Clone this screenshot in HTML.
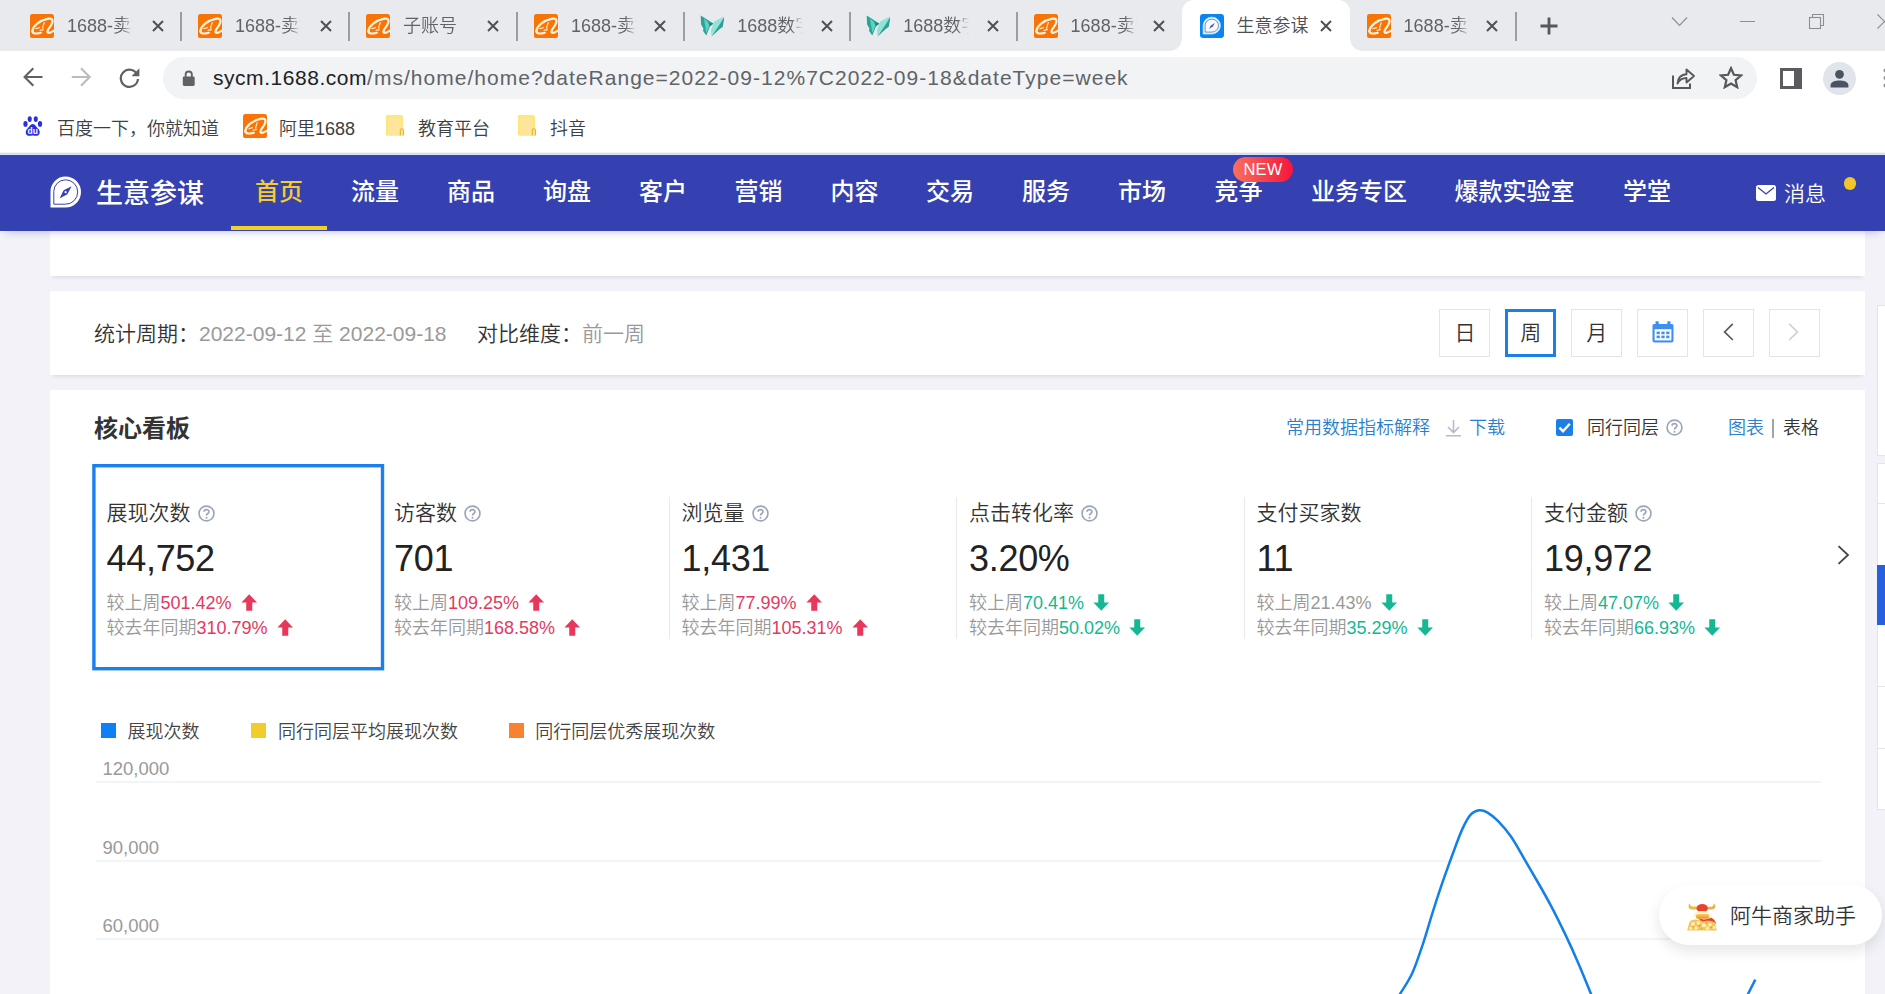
<!DOCTYPE html>
<html lang="zh-CN">
<head>
<meta charset="utf-8">
<title>生意参谋</title>
<style>
*{box-sizing:border-box;margin:0;padding:0}
html,body{width:1885px;height:994px;overflow:hidden;background:#f2f2f8}
body{position:relative;font-family:"Liberation Sans","Noto Sans CJK SC",sans-serif;color:#333;font-weight:350}
.abs{position:absolute}
.t{position:absolute;white-space:nowrap;line-height:1}
/* ===== browser chrome ===== */
#tabbar{position:absolute;left:0;top:0;width:1885px;height:51px;background:#e8eaed}
#toolbar{position:absolute;left:0;top:51px;width:1885px;height:101px;background:#fff}
#chromeline{position:absolute;left:0;top:152px;width:1885px;height:3px;background:linear-gradient(#f1f3f5 0,#f1f3f5 1px,#d6dce3 1px,#d6dce3 2px,#dce4fb 2px,#dce4fb 3px);z-index:5}
.tab{position:absolute;top:0;height:51px;width:168px}
.fav{position:absolute;left:0;top:14px;width:24px;height:24px;border-radius:4px;background:#f56a0d;overflow:hidden}
.ttl{position:absolute;left:37px;top:15px;font-size:18px;color:#5f6368;line-height:22px;white-space:nowrap;width:72px;overflow:hidden;
 -webkit-mask-image:linear-gradient(90deg,#000 0,#000 54px,transparent 66px);mask-image:linear-gradient(90deg,#000 0,#000 54px,transparent 66px)}
.cls{position:absolute;left:120px;top:19px;width:14px;height:14px}
.sep{position:absolute;left:151px;top:12px;width:2px;height:29px;background:#9a9da1}
#acttab{position:absolute;left:1182px;top:0;width:168px;height:51px;background:#fff;border-radius:12px 12px 0 0}
#acttab:before,#acttab:after{content:"";position:absolute;bottom:0;width:12px;height:12px}
#acttab:before{left:-12px;background:radial-gradient(circle at 0 0,transparent 11.5px,#fff 12px)}
#acttab:after{right:-12px;background:radial-gradient(circle at 100% 0,transparent 11.5px,#fff 12px)}
#omni{position:absolute;left:163px;top:57px;width:1594px;height:42px;border-radius:21px;background:#f1f3f4}
.bm{position:absolute;top:117.600px;font-size:18px;line-height:22px;color:#3c4043;white-space:nowrap}
/* ===== page ===== */
#nav{position:absolute;left:0;top:155px;width:1885px;height:76px;background:#3541b0;box-shadow:0 6px 8px -5px rgba(60,70,160,.3)}
.ni{position:absolute;top:21.5px;font-size:24px;line-height:30px;color:#fff;white-space:nowrap;font-weight:500}
.card{position:absolute;left:50px;width:1815px;background:#fff;box-shadow:0 4px 4px -3px rgba(70,70,120,.16)}
.btn{position:absolute;top:309px;width:51px;height:48px;border:1px solid #e4e4e7;background:#fff;font-size:21px;line-height:46px;text-align:center;color:#333}
.mlabel{position:absolute;top:501px;font-size:21px;line-height:24px;color:#333;white-space:nowrap}
.mval{position:absolute;top:539px;font-size:36px;letter-spacing:-0.3px;line-height:40px;color:#222;white-space:nowrap}
.mcmp{position:absolute;font-size:18px;line-height:22px;color:#999;white-space:nowrap}
.up{color:#e4395f}.dn{color:#12b892}
.vline{position:absolute;top:497px;width:1px;height:142px;background:#e9eaee}
.q{display:inline-block;width:17px;height:17px;vertical-align:-2px;margin-left:7px}
.ar{display:inline-block;width:16.5px;height:17px;vertical-align:-2px;margin-left:9px}
.grid{position:absolute;left:96px;width:1725px;height:2px;background:#f3f4f6}
.yl{position:absolute;left:102.5px;font-size:18.5px;line-height:20px;color:#999}
.lg{position:absolute;top:721px;font-size:18px;line-height:22px;color:#444;white-space:nowrap}
.lgs{position:absolute;top:723px;width:15px;height:15px}
</style>
</head>
<body>
<!-- BROWSER CHROME -->

<svg width="0" height="0" style="position:absolute">
<defs>
<symbol id="ali" viewBox="0 0 24 24">
<rect x="0" y="0" width="24" height="24" rx="2.600" fill="#f97406"/>
<path d="M2.300 17.300C3.100 12 9 6.600 18.500 4.700C21.200 4.200 23.100 5.100 22.300 8.500C21.700 11 19.500 13.500 18 16C17.100 17.600 17.500 19 19 18.900C20.500 18.700 22 17.700 23.500 16.900" fill="none" stroke="#fff4e0" stroke-width="2.200" stroke-linecap="round" stroke-linejoin="round"/>
<path d="M2.300 17.300C2.800 19.900 6 20.100 10.800 18.700" fill="none" stroke="#fff4e0" stroke-width="2.100" stroke-linecap="round"/>
<path d="M6 14.700L9.600 13.600M14.300 8.800C13.400 10.800 12.900 12.400 12.600 14.200M10.200 16.300L13.400 15.500" fill="none" stroke="#fff4e0" stroke-width="1.300" stroke-linecap="round" opacity=".85"/>
</symbol>
<symbol id="wing" viewBox="0 0 24 24"><g transform="translate(0.7,1.4)">
<path d="M0 0L12.700 8L9.400 10.800L8.600 12.500L5.600 20L2.400 15.500L2.700 13L0.400 9Z" fill="#27a599"/>
<path d="M3.300 3.200L9.200 8.400L7.600 13L5.600 17.500L4.600 11Z" fill="#62cfc3"/>
<path d="M7.400 7.200L12.700 8L9.400 10.900Z" fill="#0e8f80"/>
<path d="M13.500 6.200L23.400 1L19 9L10.900 21L10.200 14.500Z" fill="#93e2d8"/>
<path d="M23.900 0.900L22 11.500L19.600 13L10.900 21L19.500 8Z" fill="#27a297"/>
</g></symbol>
<symbol id="sycm" viewBox="0 0 24 24">
<rect width="24" height="24" rx="3.2" fill="#0b84f3"/>
<path d="M11.8 3.1A8.7 8.5 0 1 1 11.8 20.100H3.100V11.600A8.700 8.500 0 0 1 11.800 3.100Z" fill="#f4fbff" stroke="#8fe0ff" stroke-width="0.8"/>
<path d="M11.8 5.100A6.700 6.500 0 1 1 11.800 18.100H5.100V11.600A6.700 6.500 0 0 1 11.800 5.100Z" fill="none" stroke="#3a5a9a" stroke-width="0.7"/>
<path d="M14.9 9L10.9 11.500L9 14.900L12.800 12.500Z" fill="#4a4fa8"/>
</symbol>
<symbol id="xx" viewBox="0 0 12 12"><path d="M1 1L11 11M11 1L1 11" stroke="#4e5156" stroke-width="2" fill="none"/></symbol>
<symbol id="folder" viewBox="0 0 19 21">
<path d="M0.800 0H15.400L17 1.600V20.600H0V0.800Q0 0 0.800 0Z" fill="#fbe87c"/>
<path d="M2.200 2.600H15.300V20.600H2.200Z" fill="#ffe49c"/>
<path d="M14.300 20.600V15.300Q14.300 13.700 15.900 13.700Q17.500 13.700 17.500 15.300V20.600" fill="#fbe67a" stroke="#e2b63c" stroke-width="1.100"/>
</symbol>
</defs>
</svg>
<div id="tabbar"></div>
<div id="toolbar"></div>
<div id="chromeline"></div>
<svg class="abs" style="left:30.0px;top:14px" width="24" height="24"><use href="#ali"/></svg>
<div class="ttl" style="left:67.0px">1688-卖家</div>
<svg class="abs" style="left:151.7px;top:20px" width="12" height="12"><use href="#xx"/></svg>
<svg class="abs" style="left:198.0px;top:14px" width="24" height="24"><use href="#ali"/></svg>
<div class="ttl" style="left:235.0px">1688-卖家</div>
<svg class="abs" style="left:319.7px;top:20px" width="12" height="12"><use href="#xx"/></svg>
<svg class="abs" style="left:366.0px;top:14px" width="24" height="24"><use href="#ali"/></svg>
<div class="ttl" style="left:403.0px">子账号</div>
<svg class="abs" style="left:486.7px;top:20px" width="12" height="12"><use href="#xx"/></svg>
<svg class="abs" style="left:534.0px;top:14px" width="24" height="24"><use href="#ali"/></svg>
<div class="ttl" style="left:571.0px">1688-卖家</div>
<svg class="abs" style="left:653.7px;top:20px" width="12" height="12"><use href="#xx"/></svg>
<svg class="abs" style="left:700.3px;top:14px" width="24" height="24"><use href="#wing"/></svg>
<div class="ttl" style="left:737.3px">1688数字</div>
<svg class="abs" style="left:820.8px;top:20px" width="12" height="12"><use href="#xx"/></svg>
<svg class="abs" style="left:866.3px;top:14px" width="24" height="24"><use href="#wing"/></svg>
<div class="ttl" style="left:903.3px">1688数字</div>
<svg class="abs" style="left:986.8px;top:20px" width="12" height="12"><use href="#xx"/></svg>
<svg class="abs" style="left:1033.6px;top:14px" width="24" height="24"><use href="#ali"/></svg>
<div class="ttl" style="left:1070.6px">1688-卖家</div>
<svg class="abs" style="left:1153.1px;top:20px" width="12" height="12"><use href="#xx"/></svg>
<div id="acttab"></div>
<svg class="abs" style="left:1200.0px;top:14px" width="24" height="24"><use href="#sycm"/></svg>
<div class="t" style="left:1236.5px;top:15px;font-size:18px;line-height:22px;color:#4d5156">生意参谋</div>
<svg class="abs" style="left:1320.0px;top:20px" width="12" height="12"><use href="#xx"/></svg>
<svg class="abs" style="left:1366.6px;top:14px" width="24" height="24"><use href="#ali"/></svg>
<div class="ttl" style="left:1403.6px">1688-卖家</div>
<svg class="abs" style="left:1486.4px;top:20px" width="12" height="12"><use href="#xx"/></svg>
<div class="sep" style="left:180px"></div>
<div class="sep" style="left:348px"></div>
<div class="sep" style="left:516px"></div>
<div class="sep" style="left:683px"></div>
<div class="sep" style="left:849px"></div>
<div class="sep" style="left:1016px"></div>
<div class="sep" style="left:1515px"></div>
<svg class="abs" style="left:1540px;top:17px" width="18" height="18" viewBox="0 0 18 18"><path d="M9 0.5V17.5M0.5 9H17.5" stroke="#55585d" stroke-width="2.8" fill="none"/></svg>
<svg class="abs" style="left:1671px;top:16px" width="17" height="11" viewBox="0 0 17 11"><path d="M1 1.5L8.5 9.5L16 1.5" stroke="#8b8e93" stroke-width="1.1" fill="none"/></svg>
<div class="abs" style="left:1740px;top:20.5px;width:15px;height:1.2px;background:#8b8e93"></div>
<svg class="abs" style="left:1808px;top:13px" width="17" height="17" viewBox="0 0 17 17"><path d="M4.5 4.5V1.5H15.5V12.5H12.5" stroke="#8b8e93" stroke-width="1.1" fill="none"/><rect x="1.5" y="4.5" width="11" height="11" stroke="#8b8e93" stroke-width="1.1" fill="none"/></svg>
<svg class="abs" style="left:1877px;top:14px" width="15" height="15" viewBox="0 0 15 15"><path d="M0.5 0.5L14.5 14.5M14.5 0.5L0.5 14.5" stroke="#8b8e93" stroke-width="1.1" fill="none"/></svg>
<div id="omni"></div>
<svg class="abs" style="left:22px;top:66.4px" width="22" height="22" viewBox="0 0 22 22"><path d="M20.500 11H3.500M11.300 2.200L2.600 11L11.300 19.800" stroke="#5d6065" stroke-width="2.100" fill="none"/></svg>
<svg class="abs" style="left:70px;top:66.4px" width="22" height="22" viewBox="0 0 22 22"><path d="M1.800 11H18.800M11 2.200L19.700 11L11 19.800" stroke="#b9bcc0" stroke-width="2.100" fill="none"/></svg>
<svg class="abs" style="left:118px;top:66px" width="23" height="23" viewBox="0 0 23 23"><path d="M19 8.200A8.600 8.600 0 1 0 20 13" stroke="#5d6065" stroke-width="2.200" fill="none"/><path d="M21.400 2.300V10.200H13.500Z" fill="#5d6065"/></svg>
<svg class="abs" style="left:182.300px;top:70.300px" width="13.500" height="16.500" viewBox="0 0 14 18"><rect x="0.5" y="7" width="13" height="10.5" rx="1.6" fill="#5f6368"/><path d="M3.6 7.5V5A3.4 3.4 0 0 1 10.4 5V7.5" stroke="#5f6368" stroke-width="2" fill="none"/></svg>
<div class="t" id="url" style="left:213px;top:64px;font-size:21px;line-height:28px;color:#5f6368"><span style="color:#202124;letter-spacing:0.54px">sycm.1688.com</span><span style="letter-spacing:1.02px">/ms/home/home?dateRange=2022-09-12%7C2022-09-18&amp;dateType=week</span></div>
<svg class="abs" style="left:1671px;top:66px" width="25" height="24" viewBox="0 0 25 24"><path d="M2 9.5V22H19V17.5" stroke="#55585d" stroke-width="2" fill="none"/><path d="M6.5 17.5C7 11.5 10.5 8.5 15.5 8.2V3.5L23 10L15.5 16.5V12C11.5 12 8.5 13.5 6.5 17.5Z" stroke="#55585d" stroke-width="1.9" fill="none" stroke-linejoin="round"/></svg>
<svg class="abs" style="left:1719px;top:66px" width="24" height="23" viewBox="0 0 24 23"><path d="M12 2.2L14.9 8.8L22 9.5L16.6 14.2L18.2 21.2L12 17.5L5.8 21.2L7.4 14.2L2 9.5L9.1 8.8Z" stroke="#55585d" stroke-width="2.2" fill="none" stroke-linejoin="miter"/></svg>
<div class="abs" style="left:1780px;top:67.5px;width:22px;height:21px;border:3px solid #5a5c5f;border-right-width:8px"></div>
<div class="abs" style="left:1823px;top:62px;width:33px;height:33px;border-radius:50%;background:#e1e4ea;overflow:hidden"></div>
<svg class="abs" style="left:1823px;top:62px" width="33" height="33" viewBox="0 0 33 33"><circle cx="16.5" cy="12.3" r="4.4" fill="#4a5264"/><path d="M7.6 25.4V23.2C7.6 19.8 12.5 18.4 16.5 18.4S25.4 19.8 25.4 23.2V25.4Z" fill="#4a5264"/></svg>
<svg class="abs" style="left:1883.3px;top:68px;opacity:.7" width="5" height="20" viewBox="0 0 5 20"><circle cx="2.5" cy="2.5" r="2" fill="#5f6368"/><circle cx="2.5" cy="10" r="2" fill="#5f6368"/><circle cx="2.5" cy="17.5" r="2" fill="#5f6368"/></svg>

<svg class="abs" style="left:23px;top:116px" width="19.5" height="20" viewBox="0 0 22 21" preserveAspectRatio="none"><g fill="#2a2fe0"><ellipse cx="2.800" cy="8.300" rx="2.400" ry="3"/><ellipse cx="7.600" cy="3.200" rx="2.300" ry="3"/><ellipse cx="14.400" cy="3.200" rx="2.300" ry="3"/><ellipse cx="19.200" cy="8.300" rx="2.400" ry="3"/><path d="M11 8.400C13.800 8.400 14.800 11.400 17.400 13.600C19.800 15.600 19.400 20.800 15 20.800C13 20.800 12.400 20.400 11 20.400S9 20.800 7 20.800C2.600 20.800 2.200 15.600 4.600 13.600C7.200 11.400 8.200 8.400 11 8.400Z"/></g><text x="11" y="19.200" font-size="9.500" font-weight="700" fill="#fff" text-anchor="middle" font-family="Liberation Sans,sans-serif">du</text></svg>
<div class="bm" style="left:57px">百度一下，你就知道</div>
<svg class="abs" style="left:243px;top:114px" width="24" height="24"><use href="#ali"/></svg>
<div class="bm" style="left:279px">阿里1688</div>
<svg class="abs" style="left:386px;top:115.400px" width="19" height="21"><use href="#folder"/></svg>
<div class="bm" style="left:418px">教育平台</div>
<svg class="abs" style="left:518px;top:115.400px" width="19" height="21"><use href="#folder"/></svg>
<div class="bm" style="left:550px">抖音</div>
<!-- PAGE -->
<div class="card" style="top:230px;height:46px"></div>
<div class="card" style="top:291px;height:84px"></div>
<div class="card" style="top:390px;height:610px"></div>
<div class="t" style="left:94px;top:321px;font-size:21px;line-height:26px;color:#333">统计周期：<span style="color:#999">2022-09-12 至 2022-09-18</span></div>
<div class="t" style="left:477px;top:321px;font-size:21px;line-height:26px;color:#333">对比维度：<span style="color:#999">前一周</span></div>
<div class="btn" style="left:1439.4px">日</div>
<div class="btn" style="left:1505.3px;border:3px solid #1a7fe6;line-height:42px">周</div>
<div class="btn" style="left:1571.3px">月</div>
<div class="btn" style="left:1637.2px"></div>
<div class="btn" style="left:1703.1px"></div>
<div class="btn" style="left:1769px"></div>
<svg class="abs" style="left:1651.5px;top:321px" width="22" height="22" viewBox="0 0 22 22"><path d="M2 3H20Q21.5 3 21.5 4.5V19.5Q21.5 21.5 19.5 21.5H2.5Q0.5 21.5 0.5 19.5V4.5Q0.5 3 2 3Z" fill="#3f8ff2"/><rect x="3.5" y="0.3" width="3.2" height="5" fill="#3f8ff2"/><rect x="15.3" y="0.3" width="3.2" height="5" fill="#3f8ff2"/><rect x="2.6" y="8.2" width="16.8" height="11.2" fill="#fff"/><g fill="#3f8ff2"><rect x="4.6" y="10.6" width="3.2" height="2.6"/><rect x="9.4" y="10.6" width="3.2" height="2.6"/><rect x="14.2" y="10.6" width="3.2" height="2.6"/><rect x="4.6" y="14.6" width="3.2" height="2.6"/><rect x="9.4" y="14.6" width="3.2" height="2.6"/><rect x="14.2" y="14.6" width="3.2" height="2.6"/></g></svg>
<svg class="abs" style="left:1722.500px;top:323.300px" width="11" height="18" viewBox="0 0 11 18"><path d="M9.800 0.800L1.600 8.900L9.800 17" stroke="#5a5a5a" stroke-width="1.700" fill="none"/></svg>
<svg class="abs" style="left:1788.300px;top:323.300px" width="11" height="18" viewBox="0 0 11 18"><path d="M1.200 0.800L9.400 8.900L1.200 17" stroke="#d2d2d2" stroke-width="1.700" fill="none"/></svg>
<div class="t" style="left:94px;top:414px;font-size:24px;line-height:30px;color:#333;font-weight:700">核心看板</div>
<div class="t" style="left:1286px;top:417px;font-size:18px;line-height:22px;color:#2a80cf">常用数据指标解释</div>
<svg class="abs" style="left:1445px;top:419px" width="17" height="18" viewBox="0 0 17 18"><path d="M8.5 1V13M3 8L8.5 13.5L14 8M1 16.8H16" stroke="#b4bcc8" stroke-width="1.6" fill="none"/></svg>
<div class="t" style="left:1469px;top:417px;font-size:18px;line-height:22px;color:#2a80cf">下载</div>
<svg class="abs" style="left:1556px;top:419px" width="17" height="17" viewBox="0 0 17 17"><rect width="17" height="17" rx="2" fill="#1a7fe6"/><path d="M3.400 8.600L7 12.200L13.800 4.800" stroke="#fff" stroke-width="2.400" fill="none"/></svg>
<div class="t" style="left:1587px;top:417px;font-size:18px;line-height:22px;color:#333">同行同层<svg class="q" viewBox="0 0 16 16"><circle cx="8" cy="8" r="7" fill="none" stroke="#9aa6b8" stroke-width="1.550"/><path d="M5.700 6.400C5.700 3.600 10.300 3.600 10.300 6.300C10.300 8 8 8 8 9.900" fill="none" stroke="#9aa6b8" stroke-width="1.550"/><circle cx="8" cy="12" r="0.95" fill="#9aa6b8"/></svg></div>
<div class="t" style="left:1728px;top:417px;font-size:18px;line-height:22px;color:#2a80cf">图表</div>
<div class="abs" style="left:1772.300px;top:418.500px;width:2px;height:19px;background:#a4a4a4"></div>
<div class="t" style="left:1783px;top:417px;font-size:18px;line-height:22px;color:#333">表格</div>
<svg class="abs" style="left:90px;top:462px" width="298" height="212" viewBox="0 0 298 212"><rect x="3.9" y="3.7" width="288.6" height="203" fill="none" stroke="#1a80f0" stroke-width="3.4"/></svg>
<div class="vline" style="left:668.5px"></div>
<div class="vline" style="left:956px"></div>
<div class="vline" style="left:1243.5px"></div>
<div class="vline" style="left:1531px"></div>
<div class="mlabel" style="left:106.5px">展现次数<svg class="q" viewBox="0 0 16 16"><circle cx="8" cy="8" r="7" fill="none" stroke="#9aa6b8" stroke-width="1.550"/><path d="M5.700 6.400C5.700 3.600 10.300 3.600 10.300 6.300C10.300 8 8 8 8 9.900" fill="none" stroke="#9aa6b8" stroke-width="1.550"/><circle cx="8" cy="12" r="0.95" fill="#9aa6b8"/></svg></div>
<div class="mval" style="left:106.5px">44,752</div>
<div class="mcmp" style="left:106.5px;top:592px">较上周<span class="up">501.42%</span><svg class="ar" viewBox="0 0 16 17"><path d="M8 0.3L15.8 8.6H11V16.7H5V8.6H0.2Z" fill="#e8375b"/></svg></div>
<div class="mcmp" style="left:106.5px;top:616.7px">较去年同期<span class="up">310.79%</span><svg class="ar" viewBox="0 0 16 17"><path d="M8 0.3L15.8 8.6H11V16.7H5V8.6H0.2Z" fill="#e8375b"/></svg></div>
<div class="mlabel" style="left:394px">访客数<svg class="q" viewBox="0 0 16 16"><circle cx="8" cy="8" r="7" fill="none" stroke="#9aa6b8" stroke-width="1.550"/><path d="M5.700 6.400C5.700 3.600 10.300 3.600 10.300 6.300C10.300 8 8 8 8 9.900" fill="none" stroke="#9aa6b8" stroke-width="1.550"/><circle cx="8" cy="12" r="0.95" fill="#9aa6b8"/></svg></div>
<div class="mval" style="left:394px">701</div>
<div class="mcmp" style="left:394px;top:592px">较上周<span class="up">109.25%</span><svg class="ar" viewBox="0 0 16 17"><path d="M8 0.3L15.8 8.6H11V16.7H5V8.6H0.2Z" fill="#e8375b"/></svg></div>
<div class="mcmp" style="left:394px;top:616.7px">较去年同期<span class="up">168.58%</span><svg class="ar" viewBox="0 0 16 17"><path d="M8 0.3L15.8 8.6H11V16.7H5V8.6H0.2Z" fill="#e8375b"/></svg></div>
<div class="mlabel" style="left:681.5px">浏览量<svg class="q" viewBox="0 0 16 16"><circle cx="8" cy="8" r="7" fill="none" stroke="#9aa6b8" stroke-width="1.550"/><path d="M5.700 6.400C5.700 3.600 10.300 3.600 10.300 6.300C10.300 8 8 8 8 9.900" fill="none" stroke="#9aa6b8" stroke-width="1.550"/><circle cx="8" cy="12" r="0.95" fill="#9aa6b8"/></svg></div>
<div class="mval" style="left:681.5px">1,431</div>
<div class="mcmp" style="left:681.5px;top:592px">较上周<span class="up">77.99%</span><svg class="ar" viewBox="0 0 16 17"><path d="M8 0.3L15.8 8.6H11V16.7H5V8.6H0.2Z" fill="#e8375b"/></svg></div>
<div class="mcmp" style="left:681.5px;top:616.7px">较去年同期<span class="up">105.31%</span><svg class="ar" viewBox="0 0 16 17"><path d="M8 0.3L15.8 8.6H11V16.7H5V8.6H0.2Z" fill="#e8375b"/></svg></div>
<div class="mlabel" style="left:969px">点击转化率<svg class="q" viewBox="0 0 16 16"><circle cx="8" cy="8" r="7" fill="none" stroke="#9aa6b8" stroke-width="1.550"/><path d="M5.700 6.400C5.700 3.600 10.300 3.600 10.300 6.300C10.300 8 8 8 8 9.900" fill="none" stroke="#9aa6b8" stroke-width="1.550"/><circle cx="8" cy="12" r="0.95" fill="#9aa6b8"/></svg></div>
<div class="mval" style="left:969px">3.20%</div>
<div class="mcmp" style="left:969px;top:592px">较上周<span class="dn">70.41%</span><svg class="ar" viewBox="0 0 16 17"><path d="M8 16.7L15.8 8.4H11V0.3H5V8.4H0.2Z" fill="#14b892"/></svg></div>
<div class="mcmp" style="left:969px;top:616.7px">较去年同期<span class="dn">50.02%</span><svg class="ar" viewBox="0 0 16 17"><path d="M8 16.7L15.8 8.4H11V0.3H5V8.4H0.2Z" fill="#14b892"/></svg></div>
<div class="mlabel" style="left:1256.5px">支付买家数</div>
<div class="mval" style="left:1256.5px">11</div>
<div class="mcmp" style="left:1256.5px;top:592px">较上周<span class="">21.43%</span><svg class="ar" viewBox="0 0 16 17"><path d="M8 16.7L15.8 8.4H11V0.3H5V8.4H0.2Z" fill="#14b892"/></svg></div>
<div class="mcmp" style="left:1256.5px;top:616.7px">较去年同期<span class="dn">35.29%</span><svg class="ar" viewBox="0 0 16 17"><path d="M8 16.7L15.8 8.4H11V0.3H5V8.4H0.2Z" fill="#14b892"/></svg></div>
<div class="mlabel" style="left:1544px">支付金额<svg class="q" viewBox="0 0 16 16"><circle cx="8" cy="8" r="7" fill="none" stroke="#9aa6b8" stroke-width="1.550"/><path d="M5.700 6.400C5.700 3.600 10.300 3.600 10.300 6.300C10.300 8 8 8 8 9.900" fill="none" stroke="#9aa6b8" stroke-width="1.550"/><circle cx="8" cy="12" r="0.95" fill="#9aa6b8"/></svg></div>
<div class="mval" style="left:1544px">19,972</div>
<div class="mcmp" style="left:1544px;top:592px">较上周<span class="dn">47.07%</span><svg class="ar" viewBox="0 0 16 17"><path d="M8 16.7L15.8 8.4H11V0.3H5V8.4H0.2Z" fill="#14b892"/></svg></div>
<div class="mcmp" style="left:1544px;top:616.7px">较去年同期<span class="dn">66.93%</span><svg class="ar" viewBox="0 0 16 17"><path d="M8 16.7L15.8 8.4H11V0.3H5V8.4H0.2Z" fill="#14b892"/></svg></div>
<svg class="abs" style="left:1837px;top:545px" width="13" height="20" viewBox="0 0 13 20"><path d="M1.5 1.2L11 10L1.5 18.8" stroke="#444" stroke-width="1.8" fill="none"/></svg>
<div class="lgs" style="left:101px;background:#0d80f5"></div><div class="lg" style="left:127.5px">展现次数</div>
<div class="lgs" style="left:251px;background:#f2cc2a"></div><div class="lg" style="left:278px">同行同层平均展现次数</div>
<div class="lgs" style="left:508.8px;background:#f78330"></div><div class="lg" style="left:535.3px">同行同层优秀展现次数</div>
<div class="grid" style="top:781px"></div><div class="yl" style="top:759px">120,000</div>
<div class="grid" style="top:859.5px"></div><div class="yl" style="top:837.5px">90,000</div>
<div class="grid" style="top:938.3px"></div><div class="yl" style="top:916.3px">60,000</div>
<svg class="abs" style="left:0;top:0" width="1885" height="994" viewBox="0 0 1885 994"><path d="M1394 1004C1395.0 1002.3 1397.1 999.0 1400.1 993.9C1403.1 988.8 1408.3 981.9 1412.1 973.6C1415.9 965.3 1419.3 954.8 1422.9 944.1C1426.5 933.4 1430.0 920.4 1433.6 909.3C1437.2 898.1 1440.7 887.5 1444.3 877.2C1447.9 866.9 1451.9 856.0 1455 847.7C1458.1 839.4 1460.3 833.2 1463 827.6C1465.7 822.0 1468.4 817.1 1471.1 814.2C1473.8 811.3 1476.4 810.5 1479.1 810.2C1481.8 809.9 1484.1 810.5 1487.2 812.3C1490.3 814.1 1493.9 816.8 1497.9 820.9C1501.9 825.0 1506.8 830.5 1511.3 837C1515.8 843.5 1520.2 852.1 1524.7 859.7C1529.2 867.3 1533.5 874.7 1538 882.5C1542.5 890.3 1546.9 898.1 1551.4 906.6C1555.9 915.1 1560.3 924.0 1564.8 933.4C1569.3 942.8 1574.0 953.1 1578.2 962.9C1582.5 972.7 1587.5 985.4 1590.3 992.3C1593.1 999.1 1594.2 1002.0 1595 1004" stroke="#1280e4" stroke-width="2.5" fill="none" stroke-linejoin="round"/><path d="M1755.3 979.6L1747 996" stroke="#1280e4" stroke-width="2.5" fill="none"/></svg>
<div class="abs" style="left:1877px;top:305px;width:20px;height:151px;background:#fff;border:1px solid #e3e5ee"></div>
<div class="abs" style="left:1877px;top:463px;width:20px;height:347px;background:#fff;border:1px solid #e3e5ee"></div>
<div class="abs" style="left:1877px;top:503px;width:20px;height:1px;background:#e3e5ee"></div>
<div class="abs" style="left:1877px;top:686px;width:20px;height:1px;background:#e3e5ee"></div>
<div class="abs" style="left:1877px;top:748px;width:20px;height:1px;background:#e3e5ee"></div>
<div class="abs" style="left:1877px;top:565px;width:20px;height:60px;background:#2560e0"></div>
<div id="nav">
<svg class="abs" style="left:49.700px;top:21px" width="31" height="32" viewBox="0 0 31 32"><path d="M15.5 0.5A15 15 0 1 1 15.5 31.5H0.5V15.5A15 15 0 0 1 15.5 0.5Z" fill="#fff"/><path d="M15.5 3.800A11.700 11.700 0 1 1 15.500 28.200H3.800V15.500A11.700 11.700 0 0 1 15.500 3.800Z" fill="none" stroke="#3541b0" stroke-width="1"/><path d="M21.6 10.2L13.6 14.2L9.6 22.4L17.4 18.2Z" fill="#3541b0"/><circle cx="15.6" cy="16.2" r="1.1" fill="#fff"/></svg>
<div class="t" style="left:96px;top:22.3px;font-size:27px;line-height:34px;color:#fff;font-weight:500">生意参谋</div>
<div class="ni" style="left:255px;color:#f5cb2e">首页</div>
<div class="ni" style="left:351px;color:#fff">流量</div>
<div class="ni" style="left:447px;color:#fff">商品</div>
<div class="ni" style="left:543px;color:#fff">询盘</div>
<div class="ni" style="left:639px;color:#fff">客户</div>
<div class="ni" style="left:734.5px;color:#fff">营销</div>
<div class="ni" style="left:830.5px;color:#fff">内容</div>
<div class="ni" style="left:926px;color:#fff">交易</div>
<div class="ni" style="left:1022px;color:#fff">服务</div>
<div class="ni" style="left:1118px;color:#fff">市场</div>
<div class="ni" style="left:1214.5px;color:#fff">竞争</div>
<div class="ni" style="left:1311px;color:#fff">业务专区</div>
<div class="ni" style="left:1454.5px;color:#fff">爆款实验室</div>
<div class="ni" style="left:1623px;color:#fff">学堂</div>
<div class="abs" style="left:231px;top:71px;width:96px;height:4px;background:#efd225"></div>
<div class="abs" style="left:1233px;top:2px;width:60px;height:25px;border-radius:13px;background:linear-gradient(90deg,#f7705f,#f5163b);color:#fff;font-size:16.5px;line-height:25px;text-align:center;letter-spacing:0.2px">NEW</div>
<svg class="abs" style="left:1756px;top:30px" width="20" height="16" viewBox="0 0 20 16"><rect width="20" height="16" rx="2.5" fill="#fff"/><path d="M2 2.5L10 9L18 2.5" stroke="#3541b0" stroke-width="1.3" fill="none"/></svg>
<div class="t" style="left:1784px;top:27px;font-size:21px;line-height:24px;color:#fff">消息</div>
<div class="abs" style="left:1843.5px;top:22px;width:12.5px;height:12.5px;border-radius:50%;background:#f2c62a"></div>
</div>
<div class="abs" style="left:1659px;top:885px;width:223px;height:60px;border-radius:30px;background:#fff;box-shadow:0 6px 14px rgba(30,30,50,.11)"></div>
<svg class="abs" style="left:1687px;top:902.5px" width="30" height="28" viewBox="0 0 30 28">
<defs><linearGradient id="oxg" x1="0" y1="0" x2="0" y2="1"><stop offset="0" stop-color="#f6cf4e"/><stop offset="1" stop-color="#f08c2c"/></linearGradient></defs>
<path d="M2.600 0.300C0.800 3 1.300 6 4.500 6.500L11 6.500L11 3.600L5.500 3.600C3.800 3.400 3 2 2.600 0.300Z" fill="#eebb4a"/>
<path d="M26.800 0.300C29.300 2.500 28.800 6 25.500 6.500L19.500 6.500L19.500 3.800L24.500 3.800C26.300 3.500 26.800 2 26.800 0.300Z" fill="#e5b347"/>
<ellipse cx="15.200" cy="5.200" rx="5.600" ry="4.300" fill="#e8432f"/>
<ellipse cx="15.200" cy="12.300" rx="8.600" ry="4.200" fill="#fbf3d6"/>
<rect x="9" y="11" width="13" height="4.800" rx="2" fill="url(#oxg)"/>
<path d="M12 15.300C16 17.500 22 16 24 14.500C27 16 28.500 18.500 29.300 20.500L14 20.500Z" fill="#e6452a"/>
<path d="M5 17C9 15.500 14 17 16 18.500C19 17.500 25 17.500 28 19.500L29.700 27.400H0.200L2 20.500C2.600 18.500 3.600 17.600 5 17Z" fill="#f4c55c"/>
<g fill="#fdeeb5"><circle cx="6" cy="21" r="2"/><circle cx="11.500" cy="19.800" r="2"/><circle cx="17" cy="22" r="2.200"/><circle cx="23" cy="21.500" r="2"/><circle cx="9" cy="25" r="1.800"/><circle cx="20.500" cy="25.300" r="1.800"/><circle cx="27" cy="24.500" r="1.600"/><circle cx="3.500" cy="25.300" r="1.500"/></g>
<g fill="#e3952f"><circle cx="12.500" cy="22.800" r="0.900"/><circle cx="19" cy="20.300" r="0.800"/><circle cx="24.500" cy="24.300" r="0.900"/><circle cx="6.500" cy="23.800" r="0.800"/><circle cx="14.500" cy="26" r="0.800"/></g>
</svg>
<div class="t" style="left:1730px;top:903px;font-size:21px;line-height:26px;color:#333">阿牛商家助手</div>
</body>
</html>
